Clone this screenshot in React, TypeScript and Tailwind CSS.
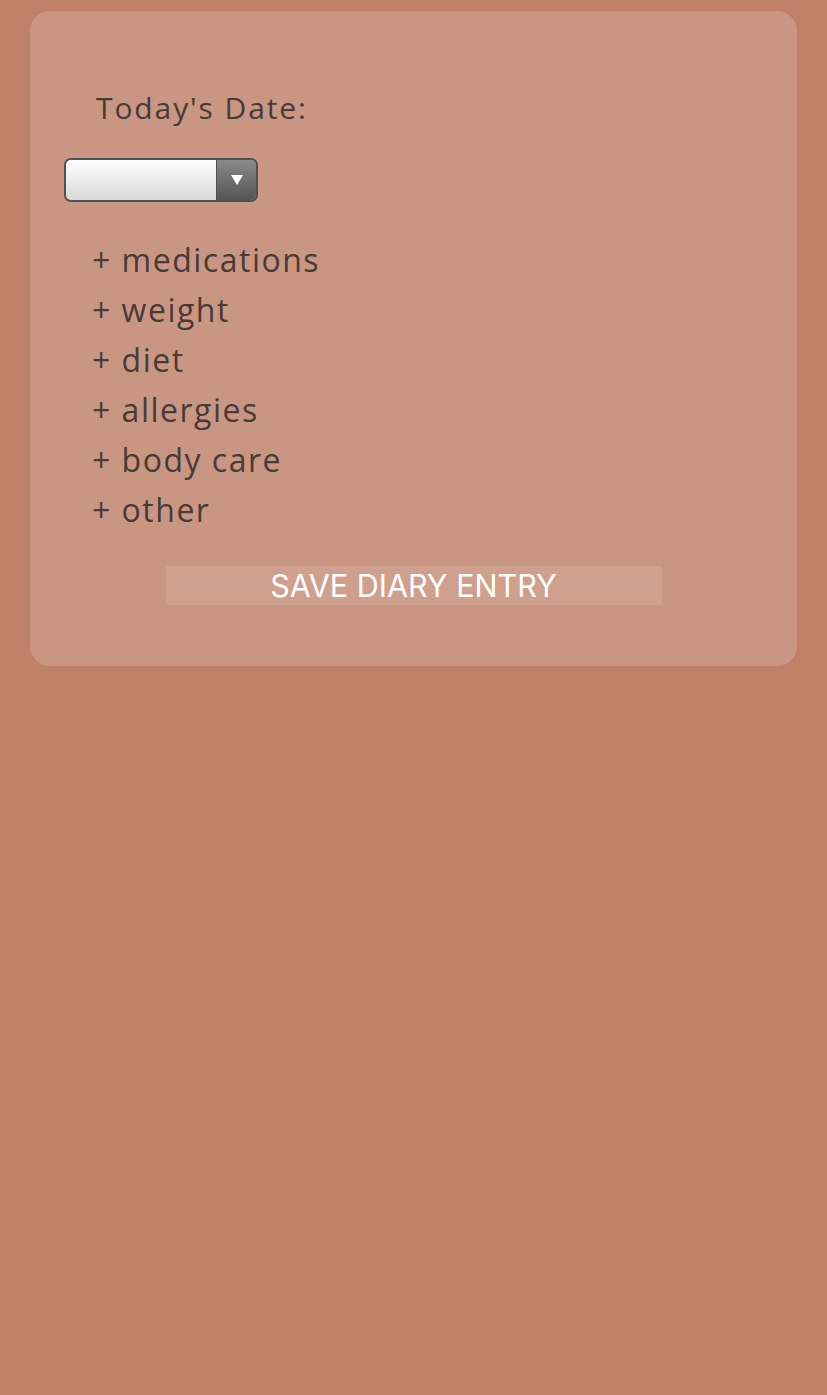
export default function App() {
  const items = ["medications", "weight", "diet", "allergies", "body care", "other"]

  return (
    <main className="min-h-[1395px] w-full bg-[#c0806a] px-[30px] pt-[11px] font-['Open_Sans',sans-serif]">
      <section className="h-[655px] rounded-[20px] bg-[#c99684] pt-[77px]">
        <h1 className="ml-[66px] text-[30px] leading-[40px] tracking-[1.9px] text-[#4a3a36]">Today's Date:</h1>

        <div className="ml-[34px] mt-[30px] flex h-[44px] w-[194px] overflow-hidden rounded-[7px] border-2 border-[#505050]">
          <div className="flex-1 bg-gradient-to-b from-white to-[#d8d8d8]" />
          <div className="flex w-[40px] items-center justify-center border-l border-[#505050] bg-gradient-to-b from-[#8a8a8a] to-[#555555]">
            <svg width="12" height="10" viewBox="0 0 12 10">
              <path d="M0 0 L12 0 L6 10 Z" fill="white" />
            </svg>
          </div>
        </div>

        <ul className="ml-[62px] mt-[33px] flex flex-col text-[32px] leading-[50px] tracking-[1.5px] text-[#4a3a36]">
          {items.map((item) => (
            <li key={item}>+ {item}</li>
          ))}
        </ul>

        <div className="mt-[31px] flex justify-center">
          <button className="h-[39px] w-[496px] bg-[#d0a08f] font-['Inter',sans-serif] text-[30.5px] leading-[39px] text-white">
            SAVE DIARY ENTRY
          </button>
        </div>
      </section>
    </main>
  )
}
